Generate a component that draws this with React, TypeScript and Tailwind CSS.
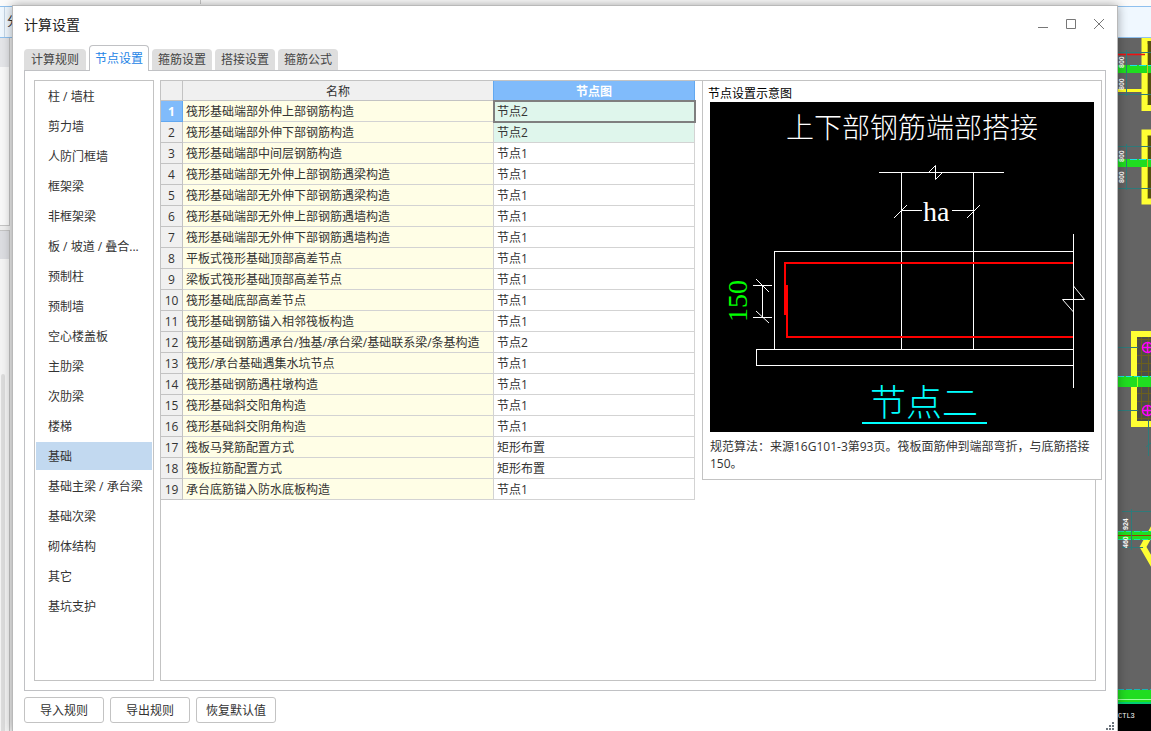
const tabs = ['计算规则', '节点设置', '箍筋设置', '搭接设置', '箍筋公式']

const categories = [
  '柱 / 墙柱', '剪力墙', '人防门框墙', '框架梁', '非框架梁', '板 / 坡道 / 叠合...', '预制柱', '预制墙', '空心楼盖板',
  '主肋梁', '次肋梁', '楼梯', '基础', '基础主梁 / 承台梁', '基础次梁', '砌体结构', '其它', '基坑支护',
]

const rows = [
  ['筏形基础端部外伸上部钢筋构造', '节点2'],
  ['筏形基础端部外伸下部钢筋构造', '节点2'],
  ['筏形基础端部中间层钢筋构造', '节点1'],
  ['筏形基础端部无外伸上部钢筋遇梁构造', '节点1'],
  ['筏形基础端部无外伸下部钢筋遇梁构造', '节点1'],
  ['筏形基础端部无外伸上部钢筋遇墙构造', '节点1'],
  ['筏形基础端部无外伸下部钢筋遇墙构造', '节点1'],
  ['平板式筏形基础顶部高差节点', '节点1'],
  ['梁板式筏形基础顶部高差节点', '节点1'],
  ['筏形基础底部高差节点', '节点1'],
  ['筏形基础钢筋锚入相邻筏板构造', '节点1'],
  ['筏形基础钢筋遇承台/独基/承台梁/基础联系梁/条基构造', '节点2'],
  ['筏形/承台基础遇集水坑节点', '节点1'],
  ['筏形基础钢筋遇柱墩构造', '节点1'],
  ['筏形基础斜交阳角构造', '节点1'],
  ['筏形基础斜交阴角构造', '节点1'],
  ['筏板马凳筋配置方式', '矩形布置'],
  ['筏板拉筋配置方式', '矩形布置'],
  ['承台底筋锚入防水底板构造', '节点1'],
]

function Canvas() {
  return (
    <svg className="h-[693px] w-[33px] shrink-0" viewBox="1118 38 33 693" aria-hidden="true">
      <rect x="1118" y="38" width="33" height="693" fill="#646464" />
      <g fill="#564f10" stroke="#ffff33" strokeWidth="6">
        <rect x="1144.5" y="38" width="20" height="70" />
        <rect x="1144.5" y="132.5" width="20" height="69" />
      </g>
      <g fill="#20dd20">
        <rect x="1118" y="65" width="33" height="8" />
        <rect x="1118" y="159" width="33" height="8" />
      </g>
      <path d="M1118 90.5H1142" stroke="#ffff22" strokeWidth="3" />
      <path d="M1118 54.5H1145" stroke="#e11" strokeWidth="1.5" />
      <path d="M1130 65.5H1151M1130 159.5H1151" stroke="#19e5e5" strokeDasharray="7 2" />
      <path d="M1147.5 44V104M1147.5 137V198" stroke="#c8c818" />
      <rect x="1134" y="334" width="24" height="90" fill="#4d4d48" stroke="#ffff33" strokeWidth="6" />
      <path
        d="M1137 339.5H1151M1137 355.5H1151M1137 363.5H1151M1137 371.5H1151M1137 393.5H1151M1137 401.5H1151M1137 418.5H1151M1141.5 337V420M1148.5 337V420"
        stroke="#6b5f1e"
      />
      <rect x="1118" y="376" width="33" height="11" fill="#20dd20" />
      <path d="M1137.5 376V387" stroke="#a0ff20" />
      <path d="M1118 376.5H1151" stroke="#19e5e5" strokeDasharray="6 2" />
      <g fill="none" stroke="#ff00ff" strokeWidth="1.5">
        <circle cx="1147.5" cy="347.5" r="5" />
        <circle cx="1147.5" cy="410.5" r="5" />
        <path d="M1142 347.5H1151M1147.5 342V353M1142 410.5H1151M1147.5 405V416" />
      </g>
      <path d="M1154 527L1143 547L1154 566" fill="none" stroke="#ffff33" strokeWidth="6" />
      <rect x="1118" y="531" width="33" height="9" fill="#20dd20" />
      <path d="M1118 535.5H1151" stroke="#9a3a00" />
      <path d="M1118 531.5H1151M1118 539.5H1151" stroke="#19e5a5" strokeDasharray="6 2" />
      <g stroke="#2f7a7a">
        <path d="M1118 52.5H1151M1118 94.5H1151M1126.5 50V96M1118 146.5H1151M1118 188.5H1151M1126.5 144V190" />
        <path d="M1118 347.5H1138M1118 410.5H1138M1148.5 420V456M1146 447L1151 443M1122 511.5H1151M1122 547.5H1143M1131.5 509V550" />
      </g>
      <g fill="#fff" fontFamily="'Liberation Sans', sans-serif" fontSize="7" fontWeight="700">
        <text transform="translate(1124 68) rotate(-90)">800</text>
        <text transform="translate(1124 90) rotate(-90)">800</text>
        <text transform="translate(1124 162) rotate(-90)">800</text>
        <text transform="translate(1124 183) rotate(-90)">800</text>
        <text transform="translate(1128 530) rotate(-90)">924</text>
        <text transform="translate(1128 548) rotate(-90)">460</text>
      </g>
      <path d="M1118 689.5H1151" stroke="#19b5b5" strokeDasharray="6 2" />
      <rect x="1118" y="690" width="33" height="14" fill="#20dd20" />
      <path d="M1118 699.5H1151" stroke="#a0ffa0" />
      <path d="M1118 703H1151" stroke="#00d070" strokeWidth="2" />
      <rect x="1118" y="704" width="33" height="27" fill="#000" />
      <text x="1118" y="718" fill="#fff" fontFamily="'Liberation Mono', monospace" fontSize="7">CTL3</text>
    </svg>
  )
}

function NodeDiagram() {
  return (
    <svg className="block w-full" viewBox="710 102 384 330" role="img" aria-label="节点设置示意图">
      <rect x="710" y="102" width="384" height="330" fill="#000" />
      <g fontFamily="'Noto Sans CJK SC', sans-serif" fontWeight="300">
        <text x="786" y="138" fontSize="28" fill="#fff">上下部钢筋端部搭接</text>
        <text x="870" y="416" fontSize="36" fill="#00ffff">节点二</text>
      </g>
      <g fontFamily="'Liberation Serif', serif" fontSize="28">
        <text x="923" y="221" fill="#fff">ha</text>
        <text transform="translate(747 322) rotate(-90)" fill="#00ff00">150</text>
      </g>
      <g fill="none" stroke="#fff" shapeRendering="crispEdges">
        <path d="M879 172.5H1004M901.5 172V349M973.5 172V349" />
        <path d="M901 210.5H922M952 210.5H974" />
        <path d="M1073 251.5H774.5V349M1073 349.5H756.5V365.5H1073M1073.5 234V388" />
        <path d="M753 285.5H772M753 317.5H772M762.5 285V318" />
      </g>
      <g fill="none" stroke="#fff">
        <path d="M929 172L935.5 165.5V179.5L942 173" />
        <path d="M894 218L907 205M967 218L980 205" />
        <path d="M756 279L769 292M756 311L769 323" />
        <path d="M1073.5 286L1084.5 299.5H1062.5L1073.5 312" />
      </g>
      <path d="M1073 263H785V315M787 285V337H1073" fill="none" stroke="#f00" strokeWidth="2" shapeRendering="crispEdges" />
      <path d="M862 423H987" stroke="#00ffff" strokeWidth="2" />
    </svg>
  )
}

function Background() {
  return (
    <div className="flex h-full flex-col bg-[#fbfbfb]">
      <div className="h-1.5 shrink-0">
        <div className="ml-[200px] h-1 w-px bg-[#c8c8c8]" />
      </div>
      <div className="flex h-8 shrink-0 items-center border-y border-[#8fc0ee] bg-[#f0f8ff]">
        <span className="ml-1 h-full w-px bg-[#c5d5e5]" />
        <span className="ml-0.5 text-xs text-[#333]">分</span>
      </div>
      <div className="flex min-h-0 grow justify-between">
        <div className="flex w-3 flex-col bg-[#eee]">
          <div className="mr-0.5 h-[188px] shrink-0 border-r border-b border-[#c4c4c4] bg-[#f8f8f8]">
            <div className="h-[29px] bg-[#e4e5e8]" />
          </div>
          <div className="mt-1 mr-0.5 grow border-t border-r border-[#c4c4c4] bg-[#f4f4f4]">
            <div className="h-7 bg-[#dcdde1]" />
            <div className="mt-[115px] ml-px h-[360px] w-1 rounded bg-[#dcdcdc]" />
          </div>
        </div>
        <Canvas />
      </div>
    </div>
  )
}

function SettingsTable() {
  return (
    <table className="w-[534px] shrink-0 table-fixed border-separate border-spacing-0 self-start leading-4">
      <colgroup>
        <col className="w-[22px]" />
        <col />
        <col className="w-[201px]" />
      </colgroup>
      <thead>
        <tr className="h-5">
          <th className="border-r border-b border-[#c3c3c3] bg-[#f0f0f0] p-0" />
          <th className="border-r border-b border-[#c3c3c3] border-r-[#62a8f0] bg-[#f0f0f0] p-0 pt-0.5 font-normal">名称</th>
          <th className="border-r border-b border-[#62a8f0] bg-[#80bbfb] p-0 pt-0.5 font-bold text-white">节点图</th>
        </tr>
      </thead>
      <tbody>
        {rows.map(([name, node], i) => (
          <tr key={name} className="h-[21px]">
            <th
              className={
                i === 0
                  ? 'border-r border-b border-[#62a8f0] bg-[#80bbfb] p-0 pt-0.5 font-bold text-white'
                  : 'border-r border-b border-[#c3c3c3] bg-[#f0f0f0] p-0 pt-0.5 font-normal'
              }
            >
              {i + 1}
            </th>
            <td className="border-r border-b border-[#d3d3d3] bg-[#fffee6] p-0 pt-0.5 pl-[3px] whitespace-nowrap">{name}</td>
            <td
              className={
                'border-r border-b border-[#d3d3d3] p-0 pt-0.5 pl-[3px] ' +
                (i === 0 ? 'bg-[#dff6ec] outline-2 -outline-offset-1 outline-[#7f7f7f]' : i === 1 ? 'bg-[#dff6ec]' : 'bg-white')
              }
            >
              {node}
            </td>
          </tr>
        ))}
      </tbody>
    </table>
  )
}

export default function App() {
  return (
    <div className="relative h-screen overflow-hidden font-['Open_Sans','Noto_Sans_CJK_SC',sans-serif] text-xs text-[#333]">
      <Background />

      <main className="absolute top-[5px] right-[33px] bottom-0 left-3 flex flex-col border border-b-0 border-[#b9b9b9] bg-white px-[11px] pb-2 shadow-[0_0_10px_rgba(0,0,0,0.35)]">
        <header className="flex h-[39px] shrink-0 items-center justify-between pb-0.5">
          <h1 className="text-sm text-[#222]">计算设置</h1>
          <div className="flex gap-4 pr-px pb-px text-[#777]">
            <button type="button" aria-label="最小化">
              <svg className="size-3" viewBox="0 0 12 12" stroke="currentColor"><path d="M1 9.5H11" /></svg>
            </button>
            <button type="button" aria-label="最大化">
              <svg className="size-3" viewBox="0 0 12 12" fill="none" stroke="currentColor"><path d="M1.5 1.5H10.5V10.5H1.5Z" /></svg>
            </button>
            <button type="button" aria-label="关闭">
              <svg className="size-3" viewBox="0 0 12 12" stroke="currentColor"><path d="M1 1L11 11M11 1L1 11" /></svg>
            </button>
          </div>
        </header>

        <div role="tablist" className="flex h-[25px] shrink-0 items-end gap-[3px]">
          {tabs.map((tab, i) => (
            <button
              key={tab}
              type="button"
              role="tab"
              aria-selected={i === 1}
              className={
                i === 1
                  ? 'z-10 -mb-px h-[26px] w-[60px] rounded-t border border-b-0 border-[#c0c1c4] bg-white text-[#2484e6]'
                  : 'h-[21px] w-[60px] rounded-t bg-[#dedede] text-[#444] first:w-[62px]'
              }
            >
              {tab}
            </button>
          ))}
        </div>

        <div className="flex min-h-0 grow gap-1.5 border border-[#c0c1c4] p-[9px]">
          <nav className="flex w-[120px] shrink-0 flex-col gap-0.5 border border-[#c3c3c3] p-px">
            {categories.map((item) => (
              <button
                key={item}
                type="button"
                className={
                  item === '基础'
                    ? 'h-7 shrink-0 bg-[#c2d9f0] pt-0.5 pl-3 text-left whitespace-nowrap'
                    : 'h-7 shrink-0 pt-0.5 pl-3 text-left whitespace-nowrap'
                }
              >
                {item}
              </button>
            ))}
          </nav>

          <section className="flex min-w-0 grow items-start gap-[7px] border border-[#c3c3c3]">
            <SettingsTable />
            <aside className="-mt-px -mr-[7px] min-w-0 grow border border-[#c3c3c3] bg-white">
              <h2 className="px-[5px] pt-1 leading-[17px] text-black">节点设置示意图</h2>
              <div className="px-[7px] pb-[7px]">
                <NodeDiagram />
                <p className="pt-1.5 leading-[17px]">规范算法：来源16G101-3第93页。筏板面筋伸到端部弯折，与底筋搭接150。</p>
              </div>
            </aside>
          </section>
        </div>

        <footer className="mt-1.5 flex shrink-0 gap-1.5">
          {['导入规则', '导出规则', '恢复默认值'].map((label) => (
            <button key={label} type="button" className="h-[26px] w-20 rounded-[3px] border border-[#c3c3c3] bg-white pt-0.5">
              {label}
            </button>
          ))}
        </footer>

        <svg className="absolute right-0.5 bottom-0 size-[9px]" viewBox="0 0 9 9" fill="#6b737b" aria-hidden="true">
          <path d="M6 0h2v2h-2zM3 3h2v2h-2zM6 3h2v2h-2zM0 6h2v2h-2zM3 6h2v2h-2zM6 6h2v2h-2z" />
        </svg>
      </main>
    </div>
  )
}
